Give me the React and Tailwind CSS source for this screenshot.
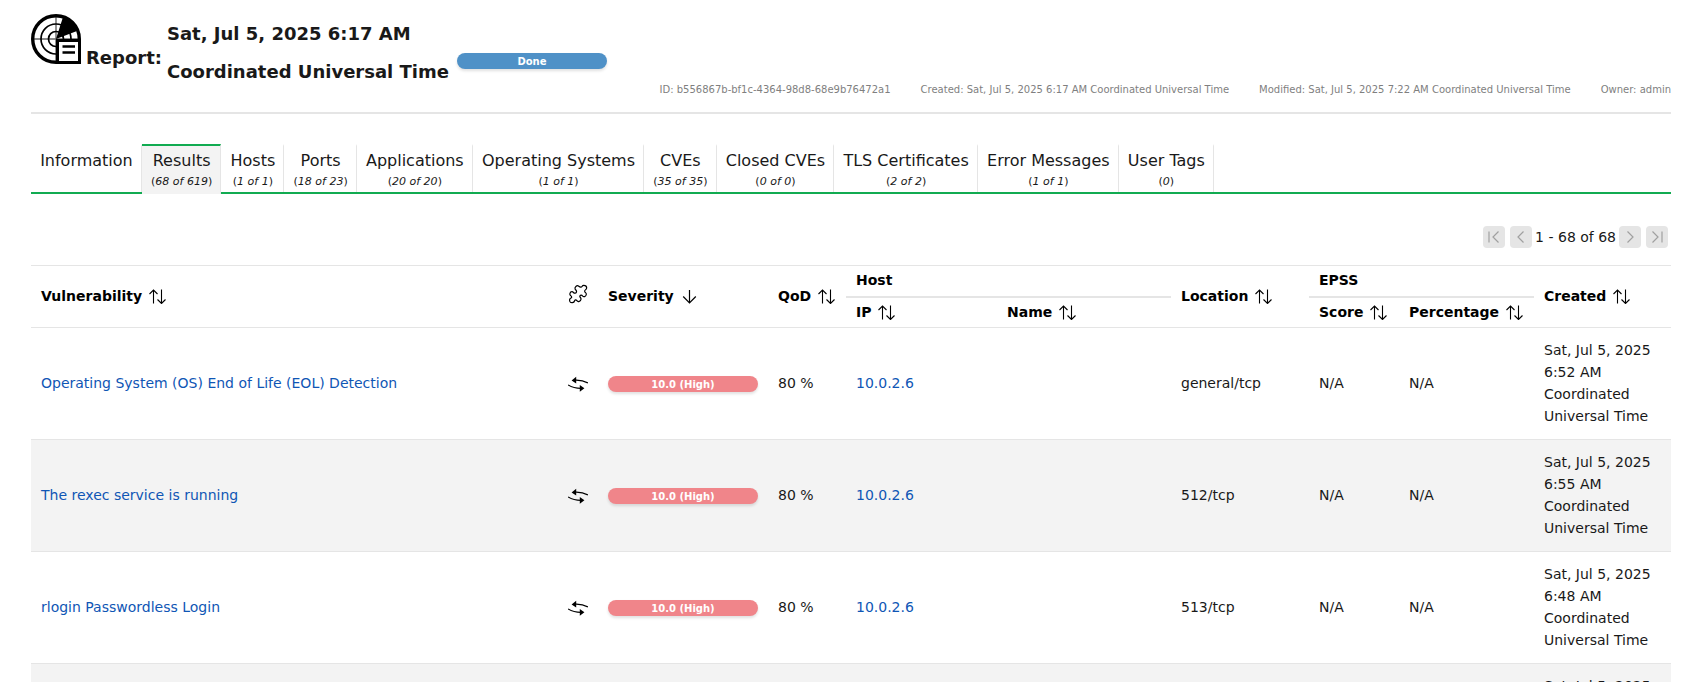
const tabs = [
  { label: "Information" },
  { label: "Results", count: "68 of 619", active: true },
  { label: "Hosts", count: "1 of 1" },
  { label: "Ports", count: "18 of 23" },
  { label: "Applications", count: "20 of 20" },
  { label: "Operating Systems", count: "1 of 1" },
  { label: "CVEs", count: "35 of 35" },
  { label: "Closed CVEs", count: "0 of 0" },
  { label: "TLS Certificates", count: "2 of 2" },
  { label: "Error Messages", count: "1 of 1" },
  { label: "User Tags", count: "0" },
];

const rows = [
  { name: "Operating System (OS) End of Life (EOL) Detection", location: "general/tcp", created: "Sat, Jul 5, 2025 6:52 AM Coordinated Universal Time" },
  { name: "The rexec service is running", location: "512/tcp", created: "Sat, Jul 5, 2025 6:55 AM Coordinated Universal Time" },
  { name: "rlogin Passwordless Login", location: "513/tcp", created: "Sat, Jul 5, 2025 6:48 AM Coordinated Universal Time" },
  { name: "Possible Backdoor: Ingreslock", location: "1524/tcp", created: "Sat, Jul 5, 2025 6:55 AM Coordinated Universal Time" },
];

function ReportIcon() {
  return (
    <svg className="shrink-0" width="50" height="50" viewBox="0 0 50 50" fill="none" stroke="#000" aria-hidden="true">
      <path d="M25 1v48M1 25h48" stroke="#666" strokeWidth="1.4" />
      <circle cx="25" cy="25" r="15" strokeWidth="1.7" />
      <circle cx="25" cy="25" r="7.5" strokeWidth="1.7" />
      <path d="M25 25 32 3 Q42 7 46 17Z" fill="#000" stroke="none" />
      <path d="M48.300 28V25C48.300 12 38 1.700 25 1.700S1.700 12 1.700 25 12 48.300 25 48.300h3" strokeWidth="3.400" />
      <path d="M26.500 26.500h22v22h-22z" fill="#fff" strokeWidth="3" />
      <path d="M31.500 32.500h12.500M31.500 38.500h12.500" strokeWidth="2.600" />
    </svg>
  );
}

function SortIcon() {
  return (
    <svg width="17" height="16" viewBox="0 0 17 16" fill="none" stroke="currentColor" strokeWidth="1.1" aria-hidden="true">
      <path d="M4.500 15.500V2M.5 6l4-4 4 4M12.500 1.500v14M8.500 11.500l4 4 4-4" />
    </svg>
  );
}

function DownIcon() {
  return (
    <svg width="17" height="16" viewBox="0 0 17 16" fill="none" stroke="currentColor" strokeWidth="1.2" aria-hidden="true">
      <path d="M8.500 2v12.500M2.200 8.500l6.300 6.300 6.300-6.300" />
    </svg>
  );
}

function PuzzleIcon() {
  return (
    <svg width="20" height="24" viewBox="-1 -1 20 24" fill="none" stroke="#000" strokeWidth="1.2" strokeLinejoin="round" role="img" aria-label="Solution type">
      <path d="M6.200 4.200C5.200 2.200 7.800-.2 9.800 1.200C11.200 2.400 12.400 2.600 13 1.500C14.200-.6 18.400.6 17.500 3.600C17 5 15 5.200 15.700 6.600C16.200 7.500 17.500 7.800 17.300 9.500C17 11.700 14.500 12.300 13.600 11C12.800 9.800 11 9.900 10.800 11.300C10.700 12.500 12.200 12.600 12 14.200C11.700 16.400 9 17.300 7.900 15.700C7 14.400 5.800 14.600 5.500 16C5 18.200 1.800 18 1 16.700C.2 15.200.5 13.600 2 13C3 12.600 2.800 11.400 1.800 10.800C0 9.600.9 6.700 3 6.700C4.500 6.700 4.500 8.400 6 8.200C7.400 8 7.900 6.600 7.300 5.600C6.900 5 6.500 4.900 6.200 4.200Z" />
    </svg>
  );
}

function WorkaroundIcon() {
  return (
    <svg width="20" height="16" viewBox="0 0 20 16" fill="none" stroke="#000" strokeWidth="1.2" role="img" aria-label="Mitigation">
      <path d="M7 4.200c4.500-.2 9 .6 12.900 2.700M13 12.300C8.500 12.300 4 11.300.1 8.900" />
      <path d="M3.600 4.500 8.200.8v6.700zM16.400 12.300 11.800 8.900v6.800z" fill="#000" stroke="none" />
    </svg>
  );
}

function PageButton({ label, d }) {
  return (
    <button type="button" disabled aria-label={label} className="flex size-[22px] items-center justify-center rounded bg-[#e5e5e5] text-[#a0a0a0]">
      <svg width="16" height="16" viewBox="0 0 16 16" fill="none" stroke="currentColor" strokeWidth="1.2" aria-hidden="true">
        <path d={d} />
      </svg>
    </button>
  );
}

function Sortable({ children, icon }) {
  return (
    <button type="button" className="flex items-center gap-[7px] font-bold">
      {children}
      {icon ?? <SortIcon />}
    </button>
  );
}

function Bar({ color, children }) {
  return (
    <div className={`h-4 w-[150px] shrink-0 rounded-lg text-center text-[10px] leading-[17px] font-bold text-white shadow-[0_2px_3px_rgba(0,0,0,0.12)] ${color}`}>
      {children}
    </div>
  );
}

const link = "text-[#0f56b5] hover:underline";

export default function App() {
  return (
    <main className={`h-screen overflow-hidden bg-white pr-[14px] pl-[31px] font-["DejaVu_Sans",sans-serif] text-sm text-[#191919]`}>
      <header className="flex items-end justify-between border-b-2 border-[#e5e5e5] pt-[14px] pb-[14px]">
        <div className="flex items-start pb-[7px]">
          <div className="flex items-baseline gap-[5px]">
            <ReportIcon />
            <span className="text-lg leading-6 font-bold">Report:</span>
          </div>
          <h1 className="mt-px ml-[5px] w-[290px] text-lg leading-[38px] font-bold">Sat, Jul 5, 2025 6:17 AM Coordinated Universal Time</h1>
          <div className="pt-[39px]">
            <Bar color="bg-[#4f91c7]">Done</Bar>
          </div>
        </div>
        <ul className="flex gap-[30px] text-[10px] leading-4 text-[#7f7f7f]">
          <li>ID: b556867b-bf1c-4364-98d8-68e9b76472a1</li>
          <li>Created: Sat, Jul 5, 2025 6:17 AM Coordinated Universal Time</li>
          <li>Modified: Sat, Jul 5, 2025 7:22 AM Coordinated Universal Time</li>
          <li>Owner: admin</li>
        </ul>
      </header>

      <nav className="mt-[30px] border-b-2 border-[#11ab51]">
        <div className="flex w-[1183px]" role="tablist">
          {tabs.map((t) => (
            <button
              key={t.label}
              type="button"
              role="tab"
              aria-selected={!!t.active}
              className={`flex flex-auto flex-col items-center border-t-2 border-r border-r-[#e5e5e5] pt-[3px] pr-2 pb-[2px] pl-[9px] whitespace-nowrap ${
                t.active ? "-mb-[2px] border-t-[#11ab51] bg-[#f3f3f3]" : "border-t-transparent"
              }`}
            >
              <span className="text-base leading-6">{t.label}</span>
              <span className="h-[17px] text-[11px] leading-[18px]">
                {t.count && (
                  <>
                    (<i>{t.count}</i>)
                  </>
                )}
              </span>
            </button>
          ))}
        </div>
      </nav>

      <div className="mt-8 mb-[17px] flex items-center justify-end gap-[3px] pr-[3px]">
        <div className="flex gap-[5px]">
          <PageButton label="First page" d="M3 2.500v11M12.500 2.500 7 8l5.500 5.500" />
          <PageButton label="Previous page" d="M10.500 2.500 5 8l5.500 5.500" />
        </div>
        <span className="leading-[22px]">1 - 68 of 68</span>
        <div className="flex gap-[5px]">
          <PageButton label="Next page" d="M5.500 2.500 11 8l-5.500 5.500" />
          <PageButton label="Last page" d="M13 2.500v11M3.500 2.500 9 8l-5.500 5.500" />
        </div>
      </div>

      <table className="w-full table-fixed border-separate border-spacing-0 text-left">
        <colgroup>
          <col />
          <col className="w-[40px]" />
          <col className="w-[170px]" />
          <col className="w-[78px]" />
          <col className="w-[151px]" />
          <col className="w-[174px]" />
          <col className="w-[138px]" />
          <col className="w-[90px]" />
          <col className="w-[135px]" />
          <col className="w-[137px]" />
        </colgroup>
        <thead className="text-black [&_th]:border-[#e5e5e5] [&_th]:px-[10px] [&_th]:pb-[2px]">
          <tr className="h-[33px] [&>th]:border-t">
            <th rowSpan={2} className="border-b"><Sortable>Vulnerability</Sortable></th>
            <th rowSpan={2} className="border-b"><PuzzleIcon /></th>
            <th rowSpan={2} className="border-b"><Sortable icon={<DownIcon />}>Severity</Sortable></th>
            <th rowSpan={2} className="border-b"><Sortable>QoD</Sortable></th>
            <th colSpan={2} className="border-b-2">Host</th>
            <th rowSpan={2} className="border-b"><Sortable>Location</Sortable></th>
            <th colSpan={2} className="border-b-2">EPSS</th>
            <th rowSpan={2} className="border-b"><Sortable>Created</Sortable></th>
          </tr>
          <tr className="h-[30px] [&>th]:border-b">
            <th><Sortable>IP</Sortable></th>
            <th><Sortable>Name</Sortable></th>
            <th><Sortable>Score</Sortable></th>
            <th><Sortable>Percentage</Sortable></th>
          </tr>
        </thead>
        <tbody className="[&_td]:border-b [&_td]:border-[#e5e5e5] [&_td]:px-[10px]">
          {rows.map((r) => (
            <tr key={r.name} className="h-[112px] even:bg-[#f3f3f3]">
              <td className="pb-[2px]"><a href="#result" className={link}>{r.name}</a></td>
              <td><WorkaroundIcon /></td>
              <td><Bar color="bg-[#f0858a]">10.0 (High)</Bar></td>
              <td className="pb-[2px]">80 %</td>
              <td className="pb-[2px]"><a href="#host" className={link}>10.0.2.6</a></td>
              <td />
              <td className="pb-[2px]">{r.location}</td>
              <td className="pb-[2px]">N/A</td>
              <td className="pb-[2px]">N/A</td>
              <td className="pb-[2px] leading-[22px]">{r.created}</td>
            </tr>
          ))}
        </tbody>
      </table>
    </main>
  );
}
